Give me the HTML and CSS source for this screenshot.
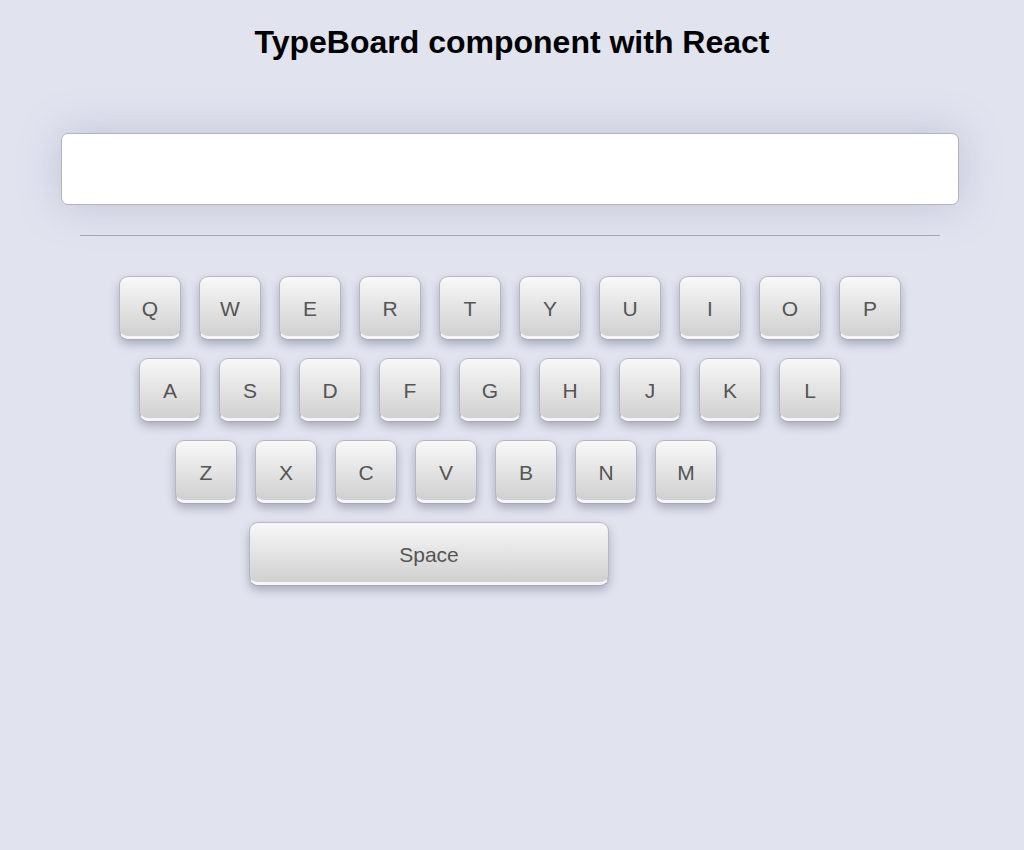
FILE: index.html
```html
<!DOCTYPE html>
<html>
<head>
<meta charset="utf-8">
<link rel="stylesheet" href="styles.css">
</head>
<body>
<h1 class="title">TypeBoard component with React</h1>
<div class="board">
  <div class="output"></div>
  <hr class="divider">
  <div class="keys">
    <div class="row row1">
      <div class="key">Q</div><div class="key">W</div><div class="key">E</div><div class="key">R</div><div class="key">T</div><div class="key">Y</div><div class="key">U</div><div class="key">I</div><div class="key">O</div><div class="key">P</div>
    </div>
    <div class="row row2">
      <div class="key">A</div><div class="key">S</div><div class="key">D</div><div class="key">F</div><div class="key">G</div><div class="key">H</div><div class="key">J</div><div class="key">K</div><div class="key">L</div>
    </div>
    <div class="row row3">
      <div class="key">Z</div><div class="key">X</div><div class="key">C</div><div class="key">V</div><div class="key">B</div><div class="key">N</div><div class="key">M</div>
    </div>
    <div class="row row4">
      <div class="key space">Space</div>
    </div>
  </div>
</div>
</body>
</html>
```
FILE: styles.css
```css
html, body {
  margin: 0;
  padding: 0;
  background: #e1e3ef;
  font-family: "Liberation Sans", Arial, sans-serif;
}
.title {
  margin: 0;
  padding-top: 24px;
  height: 40px;
  line-height: 36px;
  text-align: center;
  font-size: 32px;
  font-weight: bold;
  color: #000;
}
.board {
  padding: 0 64px 40px 61px;
  margin-top: 69px;
}
.output {
  width: 896px;
  height: 70px;
  background: #fff;
  border: 1px solid #b4b4b8;
  border-radius: 7px;
  box-shadow: 0 0 40px rgba(130, 135, 160, 0.35);
}
.divider {
  margin: 30px 20px 0 19px;
  width: 860px;
  height: 0;
  border: 0;
  border-top: 1px solid #a8a8aa;
}
.keys {
  padding-top: 40px;
  display: flex;
  flex-direction: column;
  gap: 19px;
}
.row {
  display: flex;
  gap: 18px;
}
.row1 { padding-left: 58px; }
.row2 { padding-left: 78px; }
.row3 { padding-left: 114px; }
.row4 { padding-left: 188px; }
.key {
  box-sizing: border-box;
  width: 62px;
  height: 63px;
  flex: none;
  display: flex;
  align-items: center;
  justify-content: center;
  padding-top: 4px;
  font-size: 21px;
  color: #555;
  background: linear-gradient(#f8f8f8, #d0d0d0);
  border: 1px solid #b8b8bc;
  border-bottom: 3px solid #f6f6f8;
  border-radius: 9px;
  box-shadow: 0 1px 0 #a8a8ac, 0 5px 10px rgba(80, 85, 110, 0.4);
}
.space {
  width: 360px;
}
```
